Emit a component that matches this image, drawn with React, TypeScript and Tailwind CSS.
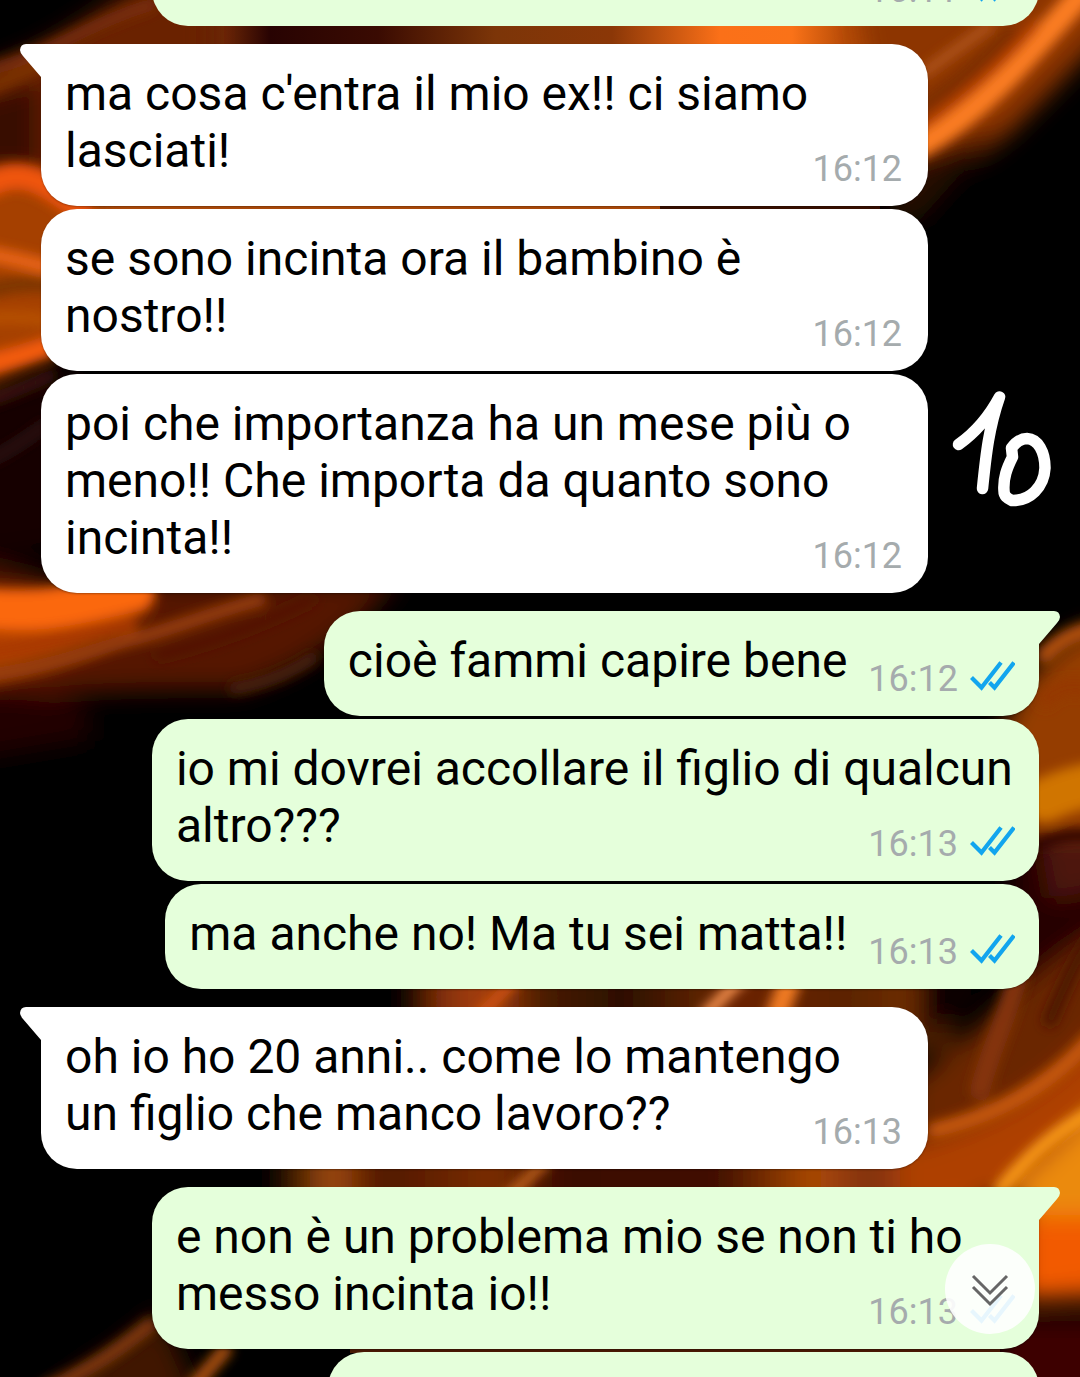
type Message = { text: string; time: string; mine?: boolean; tail?: boolean; gap?: boolean };

const messages: Message[] = [
  { text: "ma cosa c'entra il mio ex!! ci siamo lasciati!", time: "16:12", tail: true, gap: true },
  { text: "se sono incinta ora il bambino è nostro!!", time: "16:12" },
  { text: "poi che importanza ha un mese più o meno!! Che importa da quanto sono incinta!!", time: "16:12" },
  { text: "cioè fammi capire bene", time: "16:12", mine: true, tail: true, gap: true },
  { text: "io mi dovrei accollare il figlio di qualcun altro???", time: "16:13", mine: true },
  { text: "ma anche no! Ma tu sei matta!!", time: "16:13", mine: true },
  { text: "oh io ho 20 anni.. come lo mantengo un\u00a0figlio che manco lavoro??", time: "16:13", tail: true, gap: true },
  { text: "e non è un problema mio se non ti ho messo incinta io!!", time: "16:13", mine: true, tail: true, gap: true },
];

function Ticks() {
  return (
    <svg className="mb-[6px] h-[30px] w-[45px]" viewBox="0 0 45 30" fill="none" stroke="#12a5ee" strokeWidth="4.2" role="img" aria-label="Letto">
      <path d="M1.500 16.500 L11.500 26.500 L31 1.500" />
      <path d="M19.500 21.500 L24.500 26.500 L44 1.500" />
    </svg>
  );
}

function Tail({ mine }: { mine?: boolean }) {
  return mine ? (
    <svg className="absolute top-0 -right-[21px] h-[34px] w-[22px]" viewBox="0 0 22 34" fill="#e5ffdb" aria-hidden="true">
      <path d="M0 0 H16 Q21.500 0 22 6 Q22 8.500 19 12 L1 33 V34 H0 Z" />
    </svg>
  ) : (
    <svg className="absolute top-0 -left-[21px] h-[34px] w-[22px]" viewBox="0 0 22 34" fill="#fff" aria-hidden="true">
      <path d="M22 0 H6 Q.5 0 0 6 Q0 8.500 3 12 L21 33 V34 H22 Z" />
    </svg>
  );
}

function Meta({ time, mine }: { time: string; mine?: boolean }) {
  return (
    <span className="flex items-center gap-3 text-4xl leading-[42px] text-[#a5abad]">
      <time>{time}</time>
      {mine && <Ticks />}
    </span>
  );
}

function Bubble({ text, time, mine, tail, gap }: Message) {
  return (
    <li
      className={`relative w-fit max-w-8/9 rounded-[36px] px-6 pt-[21px] pb-[27px] text-5xl leading-[57px] text-black shadow-[0_1px_2px_rgba(0,0,0,0.3)] ${
        mine ? "self-end bg-[#e5ffdb]" : "self-start bg-white"
      } ${gap ? "mt-[18px]" : "mt-[3px]"} ${tail ? (mine ? "rounded-tr-none" : "rounded-tl-none") : ""}`}
    >
      {tail && <Tail mine={mine} />}
      {text}
      <span className={`float-right mt-[26px] -mb-3 ml-[21px] ${mine ? "" : "pr-[2px]"}`}>
        <Meta time={time} mine={mine} />
      </span>
    </li>
  );
}

function Streak({ d, c, w }: { d: string; c: string; w: number }) {
  return <path d={d} stroke={c} strokeWidth={w} strokeLinecap="round" />;
}

function Flames() {
  return (
    <svg className="absolute inset-0 size-full" viewBox="0 0 1080 1377" preserveAspectRatio="none" fill="none" aria-hidden="true">
      <defs>
        <filter id="soft" x="-20%" y="-20%" width="140%" height="140%"><feGaussianBlur stdDeviation="12" /></filter>
        <filter id="fine" x="-20%" y="-20%" width="140%" height="140%"><feGaussianBlur stdDeviation="6" /></filter>
        <linearGradient id="topBand" x1="180" y1="0" x2="1080" y2="0" gradientUnits="userSpaceOnUse">
          <stop offset="0" stopColor="#5e1f04" />
          <stop offset=".05" stopColor="#6b2606" />
          <stop offset=".1" stopColor="#280302" />
          <stop offset=".22" stopColor="#3a0b02" />
          <stop offset=".35" stopColor="#7c3508" />
          <stop offset=".48" stopColor="#8b3707" />
          <stop offset=".6" stopColor="#fb7018" />
          <stop offset=".68" stopColor="#fa7218" />
          <stop offset=".74" stopColor="#b64b06" />
          <stop offset="1" stopColor="#a84205" />
        </linearGradient>
        <linearGradient id="midBand" x1="400" y1="0" x2="960" y2="0" gradientUnits="userSpaceOnUse">
          <stop offset="0" stopColor="#000" />
          <stop offset=".08" stopColor="#8a3208" />
          <stop offset=".16" stopColor="#a8400a" />
          <stop offset=".25" stopColor="#4a1c04" />
          <stop offset=".4" stopColor="#2b0f02" />
          <stop offset=".52" stopColor="#572004" />
          <stop offset=".6" stopColor="#6b2404" />
          <stop offset=".8" stopColor="#5b2402" />
          <stop offset="1" stopColor="#7c3305" />
        </linearGradient>
        <linearGradient id="lowBand" x1="270" y1="0" x2="950" y2="0" gradientUnits="userSpaceOnUse">
          <stop offset="0" stopColor="#000" />
          <stop offset=".09" stopColor="#a34c0a" />
          <stop offset=".16" stopColor="#4f1602" />
          <stop offset=".33" stopColor="#7b2e05" />
          <stop offset=".43" stopColor="#3a0b02" />
          <stop offset=".66" stopColor="#401002" />
          <stop offset=".8" stopColor="#ac4a06" />
          <stop offset=".88" stopColor="#80300a" />
          <stop offset="1" stopColor="#bd4b04" />
        </linearGradient>
      </defs>
      <rect width="1080" height="1377" fill="#000" />
      <path d="M180 0 H900 V120 H180 Z" fill="url(#topBand)" />
      <path d="M80 200 H660 V215 H80 Z" fill="#b14c0a" />
      <path d="M660 200 H880 V215 H660 Z" fill="#3a1002" />
      <g filter="url(#soft)">
        <path d="M400 960 H950 V1050 H400 Z" fill="url(#midBand)" />
        <path d="M270 1135 H980 V1230 H270 Z" fill="url(#lowBand)" />
        <path d="M-30 75 C60 50 90 10 170 -30 H210 V80 L60 220 H-30 Z" fill="#6a2305" />
        <path d="M850 -30 H1120 V20 C1030 110 980 180 890 200 Z" fill="#8d3604" />
        <path d="M890 165 L1000 130 L920 220 H890 Z" fill="#260805" />
        <path d="M-30 100 L40 80 V170 H-30 Z" fill="#370a02" />
        <path d="M-30 185 C20 160 50 190 100 210 L80 330 C50 345 20 365 -30 390 Z" fill="#a54003" />
        <path d="M-30 400 L80 370 V545 L-30 560 Z" fill="#160101" />
        <path d="M-30 565 C40 560 70 610 150 580 H400 C360 620 320 665 240 690 C140 690 60 690 -30 705 Z" fill="#551703" />
        <path d="M-30 595 C60 595 120 600 150 595 C130 630 60 660 -30 680 Z" fill="#b44205" />
        <path d="M-30 690 C60 690 100 700 90 740 L-30 760 Z" fill="#200201" />
        <path d="M1120 625 C1060 625 1020 680 1000 740 L1010 840 H1120 Z" fill="#953d02" />
        <path d="M1010 835 H1120 V1000 L1010 1060 Z" fill="#270604" />
        <path d="M1040 840 H1120 V885 L1050 900 Z" fill="#4d1408" />
        <path d="M1120 920 C1040 960 950 1060 910 1080 V1190 H1120 Z" fill="#6a2504" />
        <path d="M920 955 L985 970 L920 1060 Z" fill="#0a0302" />
        <path d="M900 1150 C1010 1120 1060 1080 1120 1010 V1300 H1020 V1200 H900 Z" fill="#ae4103" />
        <path d="M1010 1190 L1120 1090 V1220 H1040 Z" fill="#eb8a08" />
        <path d="M1020 1215 H1120 V1285 L1020 1300 Z" fill="#f25a04" />
        <path d="M1000 1318 H1120 V1410 H1000 Z" fill="#3c0602" />
        <path d="M40 1400 C90 1360 120 1350 160 1310 L200 1400 Z" fill="#401503" />
      </g>
      <path d="M350 1347 H1000 V1353 H350 Z" fill="#4a1a04" />
      <g filter="url(#fine)">
        <Streak d="M-10 70 C60 50 85 25 150 5" c="#7a2e0a" w={12} />
        <Streak d="M-10 88 C10 80 20 75 40 66" c="#7c3206" w={14} />
        <Streak d="M-10 184 C20 168 40 178 80 208" c="#ef5509" w={26} />
        <Streak d="M-10 254 Q20 260 50 268" c="#e86312" w={16} />
        <Streak d="M-10 290 Q20 282 50 284" c="#7b3501" w={16} />
        <Streak d="M-10 318 Q20 316 50 320" c="#b65005" w={14} />
        <Streak d="M-10 364 Q25 355 60 342" c="#f45b08" w={22} />
        <Streak d="M-10 400 Q20 390 50 376" c="#3a1609" w={12} />
        <Streak d="M-10 460 Q20 445 45 425" c="#2f1613" w={10} />
        <Streak d="M-20 608 C40 615 70 606 135 592" c="#fb6708" w={40} />
        <Streak d="M-20 652 C40 648 80 630 130 625" c="#a93805" w={14} />
        <Streak d="M-20 676 C50 668 90 650 130 640 S220 610 260 600" c="#9a4108" w={13} />
        <Streak d="M160 655 C220 640 270 620 310 600" c="#521804" w={12} />
        <Streak d="M235 688 Q280 680 312 658" c="#4a200a" w={12} />
        <Streak d="M925 72 L990 25" c="#b2571e" w={10} />
        <Streak d="M920 108 C960 80 985 60 1010 32" c="#7a2e04" w={12} />
        <Streak d="M920 146 C980 110 1015 70 1085 -10" c="#fb7d24" w={24} />
        <Streak d="M925 125 C975 90 1010 55 1035 25" c="#b33c05" w={10} />
        <Streak d="M1045 655 Q1065 635 1090 630" c="#b5510b" w={16} />
        <Streak d="M1045 700 Q1065 680 1090 690" c="#953802" w={16} />
        <Streak d="M1045 800 Q1065 790 1090 785" c="#d07404" w={44} />
        <Streak d="M1030 850 Q1060 832 1090 836" c="#2b0403" w={12} />
        <Streak d="M1050 1020 Q1075 960 1090 940" c="#4b1603" w={14} />
        <Streak d="M980 1090 C990 1050 1010 1010 1018 975" c="#85350a" w={20} />
        <Streak d="M935 1130 C1000 1115 1050 1085 1090 1040" c="#ca5b0d" w={14} />
        <Streak d="M1000 1190 C1030 1155 1050 1135 1095 1110" c="#ffa01e" w={12} />
        <Streak d="M45 1390 C95 1368 125 1345 150 1325" c="#853a0f" w={14} />
        <Streak d="M195 1385 L225 1350" c="#b0520f" w={14} />
        <Streak d="M705 1015 L745 975" c="#ff9852" w={11} />
        <Streak d="M775 1020 L792 975" c="#f07a24" w={22} />
        <Streak d="M480 1015 L515 980" c="#d6550f" w={10} />
        <Streak d="M505 1200 L545 1162" c="#c5661a" w={10} />
      </g>
    </svg>
  );
}

export default function App() {
  return (
    <main className="relative overflow-hidden bg-black font-[Roboto,sans-serif]">
      <Flames />
      <ul className="relative flex flex-col px-[41px]">
        <li className="-mt-[54px] flex h-20 w-8/9 items-end justify-end self-end rounded-b-[36px] bg-[#e5ffdb] px-6 pb-[15px]">
          <Meta time="16:11" mine />
        </li>
        {messages.map((m, i) => (
          <Bubble key={i} {...m} />
        ))}
        <li className="mt-[3px] -mb-[55px] h-20 w-[711px] max-w-8/9 self-end rounded-t-[36px] bg-[#e5ffdb]" />
      </ul>
      <svg
        className="absolute top-[385px] right-[20px] h-[130px] w-[115px]"
        viewBox="945 385 115 130"
        fill="none"
        stroke="#fff"
        strokeWidth="11.500"
        strokeLinecap="round"
        strokeLinejoin="round"
        role="img"
        aria-label="10"
      >
        <path d="M958.500 444.500 C979 430 992 411 999.500 397 C989 427 986 454 982.500 488.500" />
        <path d="M1012.500 457 L1011.500 448 C1016 442 1020 438.500 1027 438.500 C1038 439 1045 452 1045 468 C1044 487 1030 501 1012 500.500 C1007 498 1004 496 1004 491 C1003 478 1007 468 1012.500 457" />
      </svg>
      <button
        type="button"
        aria-label="Vai in fondo"
        className="absolute right-[45px] bottom-[43px] flex size-[90px] items-center justify-center rounded-full bg-white/90"
      >
        <svg className="size-[40px]" viewBox="0 0 40 40" fill="none" stroke="#666" strokeWidth="3" aria-hidden="true">
          <path d="M3 7 L20 24 L37 7 M3 18 L20 35 L37 18" />
        </svg>
      </button>
    </main>
  );
}
